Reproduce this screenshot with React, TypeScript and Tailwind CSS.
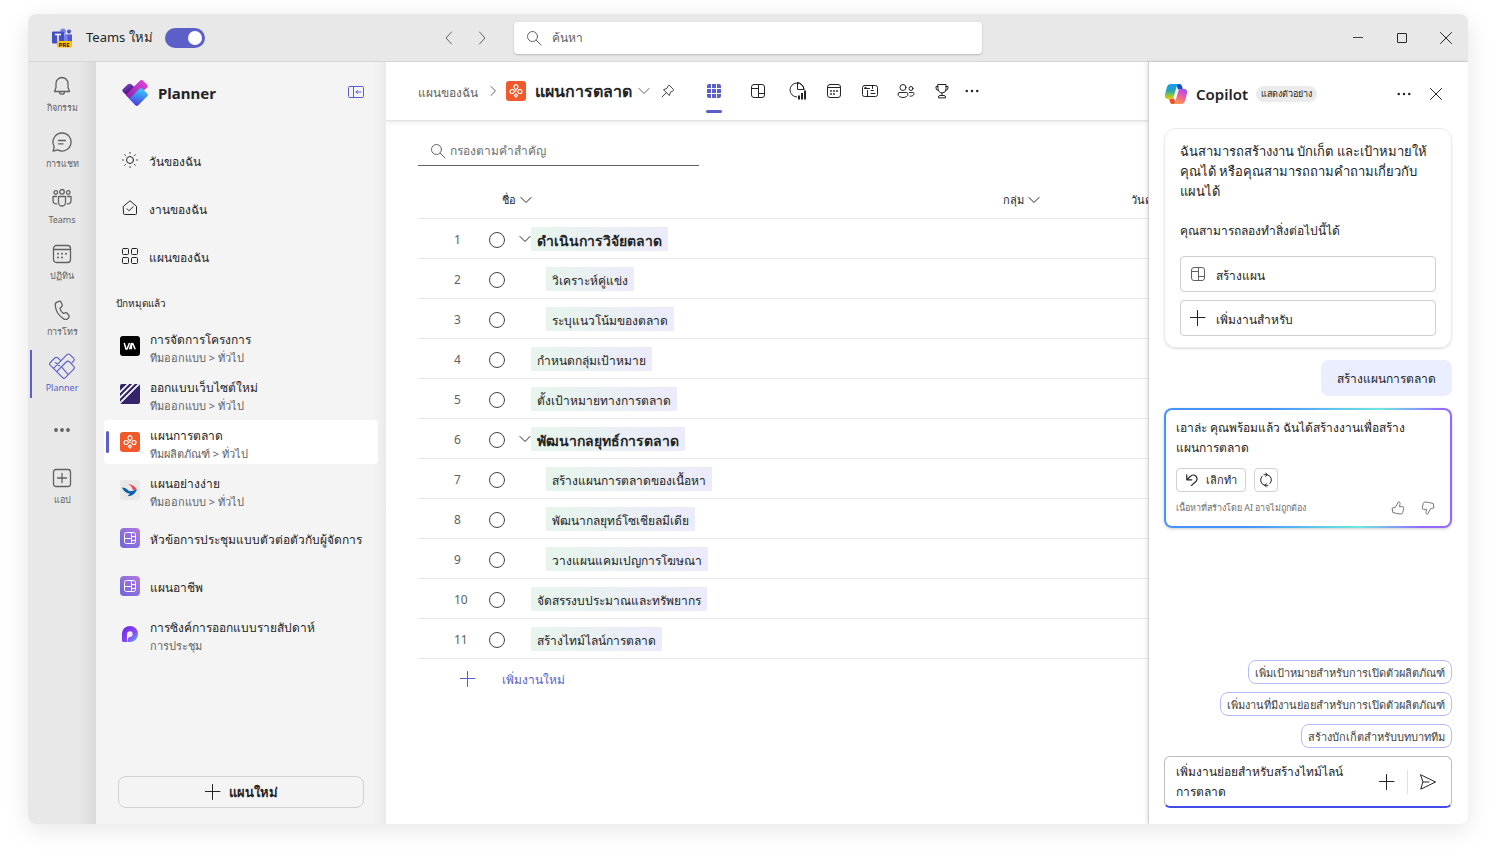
import React, { useState } from "react";

type IconProps = { className?: string; size?: number; children: React.ReactNode; box?: number; stroke?: number };

const Icon: React.FC<IconProps> = ({ className = "", size = 20, box = 20, stroke = 1, children }) => (
  <svg
    width={size}
    height={size}
    viewBox={`0 0 ${box} ${box}`}
    fill="none"
    stroke="currentColor"
    strokeWidth={stroke}
    strokeLinecap="round"
    strokeLinejoin="round"
    className={`shrink-0 ${className}`}
    aria-hidden="true"
  >
    {children}
  </svg>
);

// Small glyphs
const Search = ({ size = 16 }: { size?: number }) => (
  <Icon size={size} box={16}>
    <circle cx="6.5" cy="6.5" r="5" />
    <path d="M10.2 10.2 15 15" />
  </Icon>
);
const ChevronDown = () => (
  <Icon size={12} box={12}>
    <path d="M1 3.5 6 8.5l5-5" />
  </Icon>
);
const Plus = ({ size = 16 }: { size?: number }) => (
  <Icon size={size} box={16}>
    <path d="M7.5 .5v15M0 7.5h15" />
  </Icon>
);
const Close = () => (
  <Icon size={12} box={12}>
    <path d="m.5.5 11 11M11.5.5l-11 11" />
  </Icon>
);
const Dots = ({ size = 16 }: { size?: number }) => (
  <svg width={size} height={size} viewBox="0 0 16 16" fill="currentColor" aria-hidden="true">
    <circle cx="2" cy="8" r="1.4" />
    <circle cx="8" cy="8" r="1.4" />
    <circle cx="14" cy="8" r="1.4" />
  </svg>
);
const BoardIcon = ({ className = "" }: { className?: string }) => (
  <Icon size={16} box={16} className={className}>
    <rect x="1.5" y="1.5" width="13" height="13" rx="2.5" />
    <path d="M8.500 1.5v13M1.500 5.500h7M8.500 10.500h6" />
  </Icon>
);
const CalendarIcon = () => (
  <Icon size={16} box={16}>
    <rect x="1.5" y="1.5" width="13" height="13" rx="2.5" />
    <path d="M1.5 4.5h13" />
    <g fill="currentColor" stroke="none">
      <circle cx="5" cy="8" r=".9" />
      <circle cx="8" cy="8" r=".9" />
      <circle cx="11" cy="8" r=".9" />
      <circle cx="5" cy="11" r=".9" />
      <circle cx="8" cy="11" r=".9" />
    </g>
  </Icon>
);

// Logos
const TeamsLogo = () => (
  <svg width="22" height="20" viewBox="0 0 22 20" aria-hidden="true">
    <circle cx="12" cy="3.4" r="2.8" fill="#7b83eb" />
    <circle cx="18" cy="3.6" r="2.1" fill="#5059c9" />
    <path d="M14 6.5h7v8a3 3 0 0 1-3 3h-4z" fill="#5059c9" />
    <path d="M7 6.5h9.5v8a4 4 0 0 1-4 4H11a4 4 0 0 1-4-4z" fill="#7b83eb" />
    <rect x="1" y="3.5" width="12" height="12" rx="1" fill="#4450c4" />
    <path d="M4 6.5h6M7 6.5v6.5" stroke="#fff" strokeWidth="1.5" fill="none" />
    <rect x="6" y="13" width="15" height="6.5" rx="1" fill="#ffc20e" />
    <text x="7.6" y="18.8" fontSize="6" fontWeight="700" fill="#222" fontFamily="Noto Sans, sans-serif">
      PRE
    </text>
  </svg>
);
const PlannerLogo = () => (
  <svg width="26" height="26" viewBox="0 0 26 26" aria-hidden="true">
    <defs>
      <linearGradient id="plA" x1="0" y1="0" x2=".6" y2="1">
        <stop offset="0" stopColor="#8b52d8" />
        <stop offset=".7" stopColor="#4a1a86" />
      </linearGradient>
      <linearGradient id="plB" x1="1" y1="0" x2="0" y2="1">
        <stop offset="0" stopColor="#e34ae0" />
        <stop offset="1" stopColor="#8a1ba6" />
      </linearGradient>
      <linearGradient id="plC" x1=".6" y1="0" x2=".4" y2="1">
        <stop offset="0" stopColor="#3ecbf7" />
        <stop offset=".5" stopColor="#3f86f2" />
        <stop offset="1" stopColor="#5236d6" />
      </linearGradient>
    </defs>
    <path d="M5.5 4.6 1 9.1a2 2 0 0 0 0 2.8L5.2 16 14 8.5 9.6 4.6a3 3 0 0 0-4.1 0z" fill="url(#plA)" />
    <path d="M17.600 1 3.600 15l4.200 4.200a2 2 0 0 0 2.800 0L24.800 8a2.300 2.300 0 0 0 .3-3.300L21.500 1a2.800 2.800 0 0 0-3.900 0z" fill="url(#plB)" />
    <path d="M17.200 9 7.200 19l6.200 6.200a2 2 0 0 0 2.800 0l9-9a2 2 0 0 0 0-2.800l-4.300-4.300a2.700 2.700 0 0 0-3.700-.1z" fill="url(#plC)" />
  </svg>
);
const CopilotLogo = () => (
  <svg width="24" height="22" viewBox="0 0 24 22" aria-hidden="true">
    <defs>
      <linearGradient id="cpA" x1="0" y1="0" x2="0" y2="1">
        <stop offset="0" stopColor="#1a9bf0" />
        <stop offset=".45" stopColor="#22a5b8" />
        <stop offset=".75" stopColor="#8cc63f" />
        <stop offset="1" stopColor="#f5c400" />
      </linearGradient>
      <linearGradient id="cpB" x1=".7" y1="0" x2=".3" y2="1">
        <stop offset="0" stopColor="#a44cf0" />
        <stop offset=".5" stopColor="#f0609a" />
        <stop offset="1" stopColor="#ff9a4a" />
      </linearGradient>
    </defs>
    <path d="M12 1h3.5c1.6 0 2.2 1.2 2.6 2.6L19 6.5h-5z" fill="#1a4fc9" />
    <path d="M12 21H8.500c-1.600 0-2.200-1.200-2.600-2.600L5 15.500h5z" fill="#e8522c" />
    <path d="M7 1h8c-2 .6-2.500 3-3.200 5.500l-1.600 6c-.6 2-1.500 3.500-3.500 3.500H4c-2.600 0-3.600-2-3-4.500l1.800-7C3.500 2 5 1 7 1z" fill="url(#cpA)" />
    <path d="M17 21H9c2-.6 2.500-3 3.200-5.500l1.600-6c.6-2 1.500-3.500 3.500-3.500H20c2.600 0 3.600 2 3 4.500l-1.800 7C20.500 20 19 21 17 21z" fill="url(#cpB)" />
  </svg>
);
const KnotLogo = () => (
  <svg width="20" height="20" viewBox="0 0 20 20" className="shrink-0" aria-hidden="true">
    <rect width="20" height="20" rx="3" fill="#f1592a" />
    <g fill="none" stroke="#fff" strokeWidth="1.2" strokeLinecap="round">
      <path d="M7.600 9.300A2 2 0 1 0 7.300 12L11.600 7.200A2.100 2.100 0 1 0 8.400 7.200L9.200 8.200M11.200 10.400L12.700 12A2 2 0 1 0 12.400 9.300" />
      <path d="m10 12.800 1.600 1.600L10 16l-1.600-1.600z" strokeLinejoin="round" />
    </g>
  </svg>
);
const ViaLogo = () => (
  <svg width="20" height="20" viewBox="0 0 20 20" className="shrink-0" aria-hidden="true">
    <rect width="20" height="20" rx="3" fill="#000" />
    <path d="M4.200 7l1.800 6h1L9.500 7M9.500 13.300 11.700 7M12.500 7l2.700 6.300M11.400 7v6.300" stroke="#fff" strokeWidth="1.500" fill="none" />
  </svg>
);
const StripeLogo = () => (
  <svg width="20" height="20" viewBox="0 0 20 20" className="shrink-0" aria-hidden="true">
    <defs>
      <clipPath id="stripeBox">
        <rect width="20" height="20" rx="2" />
      </clipPath>
    </defs>
    <g clipPath="url(#stripeBox)">
      <rect width="20" height="20" fill="#35246b" />
      <path d="M-2 10 10-2M-2 15.500 15.500-2M-2 21 21-2" stroke="#fff" strokeWidth="1.700" />
    </g>
  </svg>
);
const BirdLogo = () => (
  <svg width="20" height="20" viewBox="0 0 20 20" className="shrink-0" aria-hidden="true">
    <rect width="20" height="20" rx="3" fill="#e8e8e8" />
    <path d="M8 4c4 .5 7.500 2.500 8.500 5.800L12.800 10C12.500 7.500 11 5.500 8 4z" fill="#ef4056" />
    <path d="M2 7.500c3 .2 5.300 1.400 7 3.600 2.200.2 4.800-.3 8-1.800-1.500 4.200-4.500 6.800-9.500 7l2.300-2.500C6 13.200 3.500 11.200 2 7.500z" fill="#0a5fa8" />
  </svg>
);
const GridLogo = () => (
  <svg width="20" height="20" viewBox="0 0 20 20" className="shrink-0" aria-hidden="true">
    <defs>
      <linearGradient id="gridBg" x1="1" y1="0" x2="0" y2="1">
        <stop offset="0" stopColor="#b478dc" />
        <stop offset="1" stopColor="#6a66dd" />
      </linearGradient>
    </defs>
    <rect width="20" height="20" rx="4" fill="url(#gridBg)" />
    <g fill="none" stroke="#fff">
      <rect x="4.500" y="4.500" width="11" height="11" rx="2" />
      <path d="M11.500 4.500v11M4.500 10.500h7M11.500 8.500h4M11.500 12.500h4" />
    </g>
  </svg>
);
const LoopLogo = () => (
  <svg width="20" height="20" viewBox="0 0 20 20" className="shrink-0" aria-hidden="true">
    <defs>
      <linearGradient id="loopBg" x1="0" y1="0" x2="1" y2="1">
        <stop offset="0" stopColor="#6a1ee0" />
        <stop offset=".6" stopColor="#8a4cf5" />
        <stop offset="1" stopColor="#45c8f5" />
      </linearGradient>
    </defs>
    <path d="M10 2a8 8 0 1 1 0 16H3.500A1.500 1.500 0 0 1 2 16.500V10a8 8 0 0 1 8-8z" fill="url(#loopBg)" />
    <path d="M10 7.300a2.800 2.800 0 1 1-.2 5.600c-1.300 0-2.300 2-2.300 5.100H7V10a3 3 0 0 1 3-2.700z" fill="#f3eefd" />
  </svg>
);

// App rail on the far left
const railItems = [
  {
    label: "กิจกรรม",
    icon: (
      <path d="M10 1.500a6 6 0 0 0-6 6v4L2.500 15.500h15L16 11.500v-4a6 6 0 0 0-6-6zM7.500 15.700a2.500 2.500 0 0 0 5 0" />
    ),
  },
  {
    label: "การแชท",
    icon: <path d="M10 1a9 9 0 1 1-4.300 16.900L1.200 19l1-4.500A9 9 0 0 1 10 1zM6.500 8.500h7M6.500 11.800h4.500" />,
  },
  {
    label: "Teams",
    icon: (
      <>
        <circle cx="10" cy="3.800" r="2.300" />
        <circle cx="3.800" cy="4.500" r="1.800" />
        <circle cx="16.200" cy="4.500" r="1.800" />
        <path d="M6.500 8.500h7v6a3.500 3.500 0 0 1-7 0zM4.500 8.500H1v4.300a3 3 0 0 0 3.700 3M15.500 8.500H19v4.300a3 3 0 0 1-3.700 3" />
      </>
    ),
  },
  {
    label: "ปฏิทิน",
    icon: (
      <>
        <rect x="1.500" y="1.500" width="17" height="17" rx="3" />
        <path d="M1.500 5.500h17" />
        <path d="M6 9.800h.01M10 9.800h.01M14 9.800h.01M6 13.500h.01M10 13.500h.01" strokeWidth="2" />
      </>
    ),
  },
  {
    label: "การโทร",
    icon: (
      <path d="M5.500 1.800 7 1.300c.9-.3 1.800.2 2.200 1l.9 2.200c.3.800.1 1.600-.5 2.200L8 8.200c.3 1.900 1.600 4.100 3.200 5.200l2.100-.6c.8-.2 1.600 0 2.100.7l1.400 1.900c.5.700.4 1.700-.2 2.300l-1 1c-1.100 1-2.700 1-3.900.2C6.500 15.500 3.500 10.300 3.200 5c0-1.500.9-2.800 2.300-3.200z" />
    ),
  },
];

const Rail = () => (
  <nav className="flex w-[68px] shrink-0 flex-col gap-2 bg-gradient-to-r from-[#e8e8e8] from-75% to-[#dadada] pt-2 text-[#616161]">
    {railItems.map((item) => (
      <a key={item.label} href="#" className="flex h-12 flex-col items-center text-[9px] leading-3">
        <span className="flex h-8 items-center">
          <Icon size={20} stroke={1.3}>
            {item.icon}
          </Icon>
        </span>
        {item.label}
      </a>
    ))}
    <a href="#" className="relative flex h-12 flex-col items-center text-[9px] leading-3 text-[#5b5fc7]">
      <span className="absolute top-0 left-[2px] h-12 w-[2px] bg-[#5b5fc7]" />
      <span className="flex h-8 items-center">
        <Icon size={26} box={26} stroke={1.1}>
          <path d="M11.500 7.300 9 5a2.300 2.300 0 0 0-3.200 0L1.300 9.500a2 2 0 0 0 0 2.800l3.200 3.100" />
          <path d="M4.500 15.400 17.700 1.900a2.500 2.500 0 0 1 3.500 0l3.300 3.300a2 2 0 0 1 0 2.800l-1.800 2.100M4.500 15.400l3.200 3.300M6.500 9.500l4.200 3.500" />
          <path d="M17.200 9 7.700 18.700l5.900 6a2 2 0 0 0 2.800 0l8.300-8.500a2 2 0 0 0 0-2.800L20.700 9a2.500 2.500 0 0 0-3.500 0zM12.500 13.900l6.500 7.500" />
        </Icon>
      </span>
      Planner
    </a>
    <button type="button" aria-label="เพิ่มเติม" className="flex h-12 items-center justify-center">
      <svg width="16" height="16" viewBox="0 0 16 16" fill="currentColor" aria-hidden="true">
        <circle cx="2" cy="8" r="1.900" />
        <circle cx="8" cy="8" r="1.900" />
        <circle cx="14" cy="8" r="1.900" />
      </svg>
    </button>
    <a href="#" className="flex h-12 flex-col items-center text-[9px] leading-3">
      <span className="flex h-8 items-center">
        <Icon size={20} stroke={1.3}>
          <rect x="1.500" y="1.500" width="17" height="17" rx="2.500" />
          <path d="M10 5.500v9M5.500 10h9" />
        </Icon>
      </span>
      แอป
    </a>
  </nav>
);

// Planner sidebar
const sideLinks = [
  {
    label: "วันของฉัน",
    icon: (
      <>
        <circle cx="8" cy="8" r="3.500" />
        <path d="M8 .5v.8M8 14.700v.8M.5 8h.8M14.700 8h.8M2.700 2.700l.8.8M12.500 12.500l.8.8M2.700 13.300l.8-.8M12.500 3.500l.8-.8" />
      </>
    ),
  },
  {
    label: "งานของฉัน",
    icon: <path d="M1.500 6.300 8 .8l6.500 5.500v7.200a1 1 0 0 1-1 1h-11a1 1 0 0 1-1-1zM5 8.800l2 2 4-4" />,
  },
  {
    label: "แผนของฉัน",
    icon: (
      <>
        <rect x=".5" y=".5" width="6" height="6" rx="1" />
        <rect x="9.500" y=".5" width="6" height="6" rx="1" />
        <rect x=".5" y="9.500" width="6" height="6" rx="1" />
        <rect x="9.500" y="9.500" width="6" height="6" rx="1" />
      </>
    ),
  },
];

const pinned = [
  { title: "การจัดการโครงการ", sub: "ทีมออกแบบ > ทั่วไป", logo: <ViaLogo /> },
  { title: "ออกแบบเว็บไซต์ใหม่", sub: "ทีมออกแบบ > ทั่วไป", logo: <StripeLogo /> },
  { title: "แผนการตลาด", sub: "ทีมผลิตภัณฑ์ > ทั่วไป", logo: <KnotLogo />, active: true },
  { title: "แผนอย่างง่าย", sub: "ทีมออกแบบ > ทั่วไป", logo: <BirdLogo /> },
  { title: "หัวข้อการประชุมแบบตัวต่อตัวกับผู้จัดการ", logo: <GridLogo /> },
  { title: "แผนอาชีพ", logo: <GridLogo /> },
  { title: "การซิงค์การออกแบบรายสัปดาห์", sub: "การประชุม", logo: <LoopLogo /> },
];

const Sidebar = () => (
  <aside className="flex w-[290px] shrink-0 flex-col bg-gradient-to-r from-[#f4f4f4] from-95% to-[#ebebeb] px-2 pb-4">
    <div className="flex h-[62px] items-center pr-[14px] pl-[18px]">
      <PlannerLogo />
      <h1 className="ml-[10px] flex-1 text-[15px] font-bold text-[#242424]">Planner</h1>
      <button type="button" aria-label="ยุบ" className="text-[#5b5fc7]">
        <Icon size={16} box={16}>
          <rect x=".5" y="1.500" width="15" height="11" rx="1" />
          <path d="M5.500 1.500v11M13 7H8M9.500 5.500 8 7l1.500 1.500" />
        </Icon>
      </button>
    </div>
    <nav className="mt-[14px] flex flex-col gap-1">
      {sideLinks.map((l) => (
        <a key={l.label} href="#" className="flex h-11 items-center gap-[11px] pl-[18px] text-[12px] text-[#242424]">
          <Icon size={16} box={16}>
            {l.icon}
          </Icon>
          <span className="pt-[3px]">{l.label}</span>
        </a>
      ))}
    </nav>
    <h2 className="mt-[17px] mb-[13px] pl-3 text-[10px] leading-4 text-[#242424]">ปักหมุดแล้ว</h2>
    <nav className="flex flex-col gap-1">
      {pinned.map((p) => (
        <a
          key={p.title}
          href="#"
          className={`relative flex h-11 items-center gap-[10px] rounded pl-4 text-[12px] text-[#242424] ${
            p.active ? "bg-white" : ""
          }`}
        >
          {p.active && <span className="absolute top-[11px] left-[2px] h-[22px] w-[3px] rounded bg-[#5b5fc7]" />}
          {p.logo}
          <span className="flex flex-col pt-[3px] whitespace-nowrap">
            <span className="leading-5">{p.title}</span>
            {p.sub && <span className="text-[11px] leading-4 text-[#616161]">{p.sub}</span>}
          </span>
        </a>
      ))}
    </nav>
    <button
      type="button"
      className="mx-[14px] mt-auto flex h-8 items-center justify-center gap-2 rounded-lg border border-[#d1d1d1] text-[13px] font-bold text-[#242424]"
    >
      <Plus />
      <span className="pt-[2px]">แผนใหม่</span>
    </button>
  </aside>
);

// Main grid
const tasks = [
  { name: "ดำเนินการวิจัยตลาด", group: true },
  { name: "วิเคราะห์คู่แข่ง", child: true },
  { name: "ระบุแนวโน้มของตลาด", child: true },
  { name: "กำหนดกลุ่มเป้าหมาย" },
  { name: "ตั้งเป้าหมายทางการตลาด" },
  { name: "พัฒนากลยุทธ์การตลาด", group: true },
  { name: "สร้างแผนการตลาดของเนื้อหา", child: true },
  { name: "พัฒนากลยุทธ์โซเชียลมีเดีย", child: true },
  { name: "วางแผนแคมเปญการโฆษณา", child: true },
  { name: "จัดสรรงบประมาณและทรัพยากร" },
  { name: "สร้างไทม์ไลน์การตลาด" },
];

const views = [
  {
    name: "แผนภูมิ",
    icon: (
      <Icon size={18} box={18}>
        <path d="M7.500 15A7 7 0 1 1 15 7.500H8.500v-7M15 7.500a7 7 0 0 0-6.500-7" />
        <path d="M10 13.500v4M13 11v6.500M16 8.500v9" strokeWidth="2" strokeLinecap="butt" />
      </Icon>
    ),
  },
  { name: "กำหนดการ", icon: <CalendarIcon /> },
  {
    name: "ไทม์ไลน์",
    icon: (
      <Icon size={18} box={18}>
        <rect x="1.500" y="3.500" width="15" height="11" rx="2" />
        <path d="M6.500 8.500v6M11.500 3.500v3M3.500 6.500h5M10 8.500h2.500M10 11.500h4M4 5.500h1" />
      </Icon>
    ),
  },
  {
    name: "บุคคล",
    icon: (
      <Icon size={18} box={18}>
        <circle cx="6" cy="5.500" r="3" />
        <circle cx="14" cy="6.500" r="2" />
        <path d="M2.500 10.500h7a1.500 1.500 0 0 1 1.500 1.500c0 2-2 3.500-5 3.500S1 14 1 12a1.500 1.500 0 0 1 1.500-1.500zM12.500 10.500h3.300A1.200 1.200 0 0 1 17 11.700c0 1.700-1.600 2.600-4 2.500" />
      </Icon>
    ),
  },
  {
    name: "เป้าหมาย",
    icon: (
      <Icon size={16} box={16}>
        <path d="M4 1.500h8V6a4 4 0 0 1-8 0zM4 3.500H2V5a2.500 2.500 0 0 0 2.300 2.500M12 3.500h2V5a2.500 2.500 0 0 1-2.300 2.500M8 10v2.500M4.500 14.500v-.5a1.500 1.500 0 0 1 1.500-1.500h4a1.500 1.500 0 0 1 1.500 1.500v.5z" />
      </Icon>
    ),
  },
];

const TaskGrid = () => {
  const [done, setDone] = useState<number[]>([]);
  const toggle = (i: number) => setDone(done.includes(i) ? done.filter((d) => d !== i) : [...done, i]);

  return (
    <main className="min-w-0 flex-1 overflow-hidden bg-white">
      <header className="flex h-[59px] items-center border-b border-[#e3e3e3] pl-8 shadow-[0_1px_4px_rgba(0,0,0,0.1)]">
        <a href="#" className="pt-[3px] text-[12px] whitespace-nowrap text-[#616161]">
          แผนของฉัน
        </a>
        <span className="mr-2 ml-[10px] text-[#616161]">
          <Icon size={10} box={10}>
            <path d="M3 .5 7.500 5 3 9.500" />
          </Icon>
        </span>
        <KnotLogo />
        <h2 className="ml-[9px] text-[16px] font-bold whitespace-nowrap text-[#242424]">แผนการตลาด</h2>
        <button type="button" aria-label="เลือกแผน" className="ml-[6px] text-[#616161]">
          <ChevronDown />
        </button>
        <button type="button" aria-label="ปักหมุด" className="ml-[10px] text-[#424242]">
          <Icon size={16} box={16}>
            <path d="m9.500 2.500 4 4c.4.400.3 1-.2 1.200L10.500 9.200 9.300 12.500 3.500 6.700l3.300-1.200L8.300 2.700c.2-.5.800-.6 1.200-.2zM6.400 9.600 2 14" />
          </Icon>
        </button>
        <div className="ml-[22px] flex h-full items-center gap-1 text-[#242424]">
          <button
            type="button"
            aria-label="ตาราง"
            className="relative mr-2 flex h-10 w-8 items-center justify-center text-[#5b5fc7]"
          >
            <svg width="14" height="14" viewBox="0 0 14 14" fill="currentColor" aria-hidden="true">
              <path d="M2 0h2v4H0V2a2 2 0 0 1 2-2zM5 0h4v4H5zM10 0h2a2 2 0 0 1 2 2v2h-4zM0 5h4v4H0zM5 5h4v4H5zM10 5h4v4h-4zM0 10h4v4H2a2 2 0 0 1-2-2zM5 10h4v4H5zM10 10h4v2a2 2 0 0 1-2 2h-2z" />
            </svg>
            <span className="absolute -bottom-[2px] left-2 h-[3px] w-4 rounded bg-[#5b5fc7]" />
          </button>
          <button type="button" aria-label="บอร์ด" className="mr-1 flex size-8 items-center justify-center">
            <BoardIcon />
          </button>
          {views.map((v) => (
            <button key={v.name} type="button" aria-label={v.name} className="flex size-8 items-center justify-center">
              {v.icon}
            </button>
          ))}
          <button type="button" aria-label="ตัวเลือกเพิ่มเติม" className="flex h-8 w-5 items-center justify-center">
            <Dots size={14} />
          </button>
        </div>
      </header>

      <div className="pt-4 pl-8">
        <label className="flex h-[29px] w-[281px] items-center gap-1 border-b border-[#616161] pl-3 text-[#616161]">
          <Search />
          <input
            type="text"
            aria-label="กรองตามคำสำคัญ"
            placeholder="กรองตามคำสำคัญ"
            className="w-full bg-transparent text-[12px] outline-none placeholder:text-[#707070]"
          />
        </label>

        <table className="mt-4 w-full table-fixed border-collapse text-[12px] text-[#242424]">
          <colgroup>
            <col className="w-[71px]" />
            <col className="w-[30px]" />
            <col />
            <col className="w-32" />
            <col className="w-[17px]" />
          </colgroup>
          <thead>
            <tr className="h-9 border-b border-[#e8e8e8] text-left text-[11px] whitespace-nowrap">
              <th />
              <th colSpan={2} className="pl-[13px] font-normal">
                <button type="button" className="flex items-center gap-1">
                  ชื่อ <ChevronDown />
                </button>
              </th>
              <th className="font-normal">
                <button type="button" className="flex items-center gap-1">
                  กลุ่ม <ChevronDown />
                </button>
              </th>
              <th className="overflow-hidden font-normal">วันค</th>
            </tr>
          </thead>
          <tbody>
            {tasks.map((t, i) => (
              <tr key={t.name} className="h-10 border-b border-[#e8e8e8]">
                <td className="pt-1 pl-9 text-[#616161]">{i + 1}</td>
                <td className="pt-1">
                  <input
                    type="checkbox"
                    aria-label={t.name}
                    checked={done.includes(i)}
                    onChange={() => toggle(i)}
                    className="block size-4 appearance-none rounded-full border border-[#424242] checked:bg-[#5b5fc7]"
                  />
                </td>
                <td colSpan={3} className="pt-[2px]">
                  <div className={`flex items-center ${t.child ? "pl-[27px]" : t.group ? "" : "pl-3"}`}>
                    {t.group && (
                      <button type="button" aria-label="ยุบกลุ่ม" className="w-3">
                        <ChevronDown />
                      </button>
                    )}
                    <span
                      className={`h-6 bg-gradient-to-r from-[#e7f5ec] to-[#ecebfb] px-[6px] pt-1 leading-5 ${
                        t.group ? "text-[14px] font-bold" : ""
                      }`}
                    >
                      {t.name}
                    </span>
                  </div>
                </td>
              </tr>
            ))}
          </tbody>
        </table>
        <button type="button" className="flex h-10 items-center gap-[26px] pl-[42px] text-[12px] text-[#5b5fc7]">
          <Plus />
          <span className="pt-[3px]">เพิ่มงานใหม่</span>
        </button>
      </div>
    </main>
  );
};

// Copilot pane
const suggestions = [
  "เพิ่มเป้าหมายสำหรับการเปิดตัวผลิตภัณฑ์",
  "เพิ่มงานที่มีงานย่อยสำหรับการเปิดตัวผลิตภัณฑ์",
  "สร้างบักเก็ตสำหรับบทบาททีม",
];

const thumb = "M5.500 14 2 13 1.300 8.200 5.200 7 8.500 1c1.700 0 2.300 1.300 1.800 2.800L9.500 6.500h3.700a1.400 1.400 0 0 1 1.300 1.700l-1.100 5a2.200 2.200 0 0 1-2.600 1.700z";

const Copilot = () => {
  const [draft, setDraft] = useState("เพิ่มงานย่อยสำหรับสร้างไทม์ไลน์การตลาด");

  return (
    <aside className="z-10 flex w-80 shrink-0 flex-col border-l border-[#d1d1d1] bg-white pr-4 pb-4 pl-[15px] text-[12px] leading-5 text-[#242424] shadow-[-1px_0_4px_rgba(0,0,0,0.12)]">
      <div className="mb-[2px] flex h-16 items-center">
        <CopilotLogo />
        <h2 className="ml-2 text-[15px] font-semibold">Copilot</h2>
        <span className="ml-2 rounded-full bg-[#ebebeb] px-[5px] text-[9px] leading-4">แสดงตัวอย่าง</span>
        <button type="button" aria-label="เพิ่มเติม" className="ml-auto flex size-8 items-center justify-center">
          <Dots size={14} />
        </button>
        <button type="button" aria-label="ปิด" className="flex size-8 items-center justify-center">
          <Close />
        </button>
      </div>

      <section className="rounded-xl border border-[#ececec] px-[15px] pt-3 pb-[11px] shadow-[0_1px_2px_rgba(0,0,0,0.14)]">
        <p className="text-[13px]">
          ฉันสามารถสร้างงาน บักเก็ต และเป้าหมายให้คุณได้ หรือคุณสามารถถามคำถามเกี่ยวกับแผนได้
        </p>
        <p className="mt-5">คุณสามารถลองทำสิ่งต่อไปนี้ได้</p>
        <div className="mt-[15px] flex flex-col gap-2">
          <button type="button" className="flex h-9 items-center gap-[10px] rounded border border-[#d1d1d1] px-[9px]">
            <BoardIcon className="text-[#616161]" />
            <span className="pt-[3px]">สร้างแผน</span>
          </button>
          <button type="button" className="flex h-9 items-center gap-[10px] rounded border border-[#d1d1d1] px-[9px]">
            <Plus />
            <span className="pt-[3px]">เพิ่มงานสำหรับ</span>
          </button>
        </div>
      </section>

      <p className="mt-3 self-end rounded-lg bg-[#ebeefe] px-4 pt-[9px] pb-[7px]">สร้างแผนการตลาด</p>

      <section className="mt-3 rounded-lg bg-[linear-gradient(100deg,#4894fe_35%,#6de8e0_70%,#946afd_90%)] p-[2px] shadow-[0_1px_3px_rgba(0,0,0,0.2)]">
        <div className="rounded-md bg-white px-[10px] pt-2 pb-[10px]">
          <p>เอาล่ะ คุณพร้อมแล้ว ฉันได้สร้างงานเพื่อสร้างแผนการตลาด</p>
          <div className="mt-[10px] flex gap-2">
            <button
              type="button"
              className="flex h-6 w-[70px] items-center justify-center gap-2 rounded border border-[#d1d1d1] text-[11px]"
            >
              <Icon size={12} box={12} stroke={1.2}>
                <path d="M.8.800v5h5M1 5.600l3.500-3.300a3.700 3.700 0 0 1 5.600 4.900L5.300 11.600" />
              </Icon>
              เลิกทำ
            </button>
            <button
              type="button"
              aria-label="ลองอีกครั้ง"
              className="flex size-6 items-center justify-center rounded border border-[#d1d1d1]"
            >
              <Icon size={16} box={16}>
                <path d="M6 2.700h3a5.300 5.300 0 0 1 3 8.800M10 13.300H7a5.300 5.300 0 0 1-3-8.800M7.700 1 9.300 2.700 7.700 4.400M8.300 11.600 6.700 13.300 8.300 15" />
              </Icon>
            </button>
          </div>
          <div className="mt-2 flex items-center text-[9px] leading-4 text-[#707070]">
            <span className="flex-1">เนื้อหาที่สร้างโดย AI อาจไม่ถูกต้อง</span>
            <button type="button" aria-label="ถูกใจ" className="mr-4">
              <Icon size={14} box={16} stroke={1.1}>
                <path d={thumb} />
              </Icon>
            </button>
            <button type="button" aria-label="ไม่ถูกใจ" className="mr-[5px]">
              <Icon size={14} box={16} stroke={1.1} className="rotate-180">
                <path d={thumb} />
              </Icon>
            </button>
          </div>
        </div>
      </section>

      <div className="mt-auto flex flex-col items-end gap-2">
        {suggestions.map((s) => (
          <button
            key={s}
            type="button"
            className="h-6 rounded-lg border border-[#b4bdfb] px-[6px] pt-[2px] text-[11px] leading-5 whitespace-nowrap text-[#424242]"
          >
            {s}
          </button>
        ))}
      </div>

      <div className="mt-2 flex h-[52px] items-center rounded-md border border-b-2 border-[#bdbdbd] border-b-[#444ce7] pr-[15px] pl-[11px]">
        <textarea
          aria-label="ข้อความ"
          value={draft}
          onChange={(e) => setDraft(e.target.value)}
          rows={2}
          className="h-10 min-w-0 flex-1 resize-none overflow-hidden outline-none"
        />
        <button type="button" aria-label="แนบ" className="ml-6">
          <Plus />
        </button>
        <span className="mx-3 h-6 w-px bg-[#e0e0e0]" />
        <button type="button" aria-label="ส่ง">
          <Icon size={16} box={16}>
            <path d="M.8.800 15.500 8 .8 15.200 2.800 8zM2.800 8H9" />
          </Icon>
        </button>
      </div>
    </aside>
  );
};

const App: React.FC = () => (
  <div className="flex min-h-screen flex-col bg-white px-7 pt-[14px] pb-[42px] font-['Noto_Sans',sans-serif]">
    <div className="flex flex-1 flex-col overflow-hidden rounded-lg shadow-[0_6px_24px_rgba(0,0,0,0.1)]">
      {/* Title bar */}
      <header className="grid h-12 grid-cols-[1fr_468px_1fr] items-center border-b border-[#d6d6d6] bg-[#e8e8e8] text-[#242424]">
        <div className="flex items-center pl-[23px]">
          <TeamsLogo />
          <label className="ml-[13px] flex items-center gap-3 text-[13px]">
            Teams ใหม่
            <input
              type="checkbox"
              role="switch"
              defaultChecked
              className="flex h-5 w-10 appearance-none items-center rounded-full bg-[#8a8a8a] px-[3px] before:size-[14px] before:rounded-full before:bg-white checked:justify-end checked:bg-[#5b5fc7]"
            />
          </label>
          <div className="mr-[25px] ml-auto flex gap-[19px] text-[#616161]">
            <button type="button" aria-label="ย้อนกลับ">
              <Icon size={14} box={14}>
                <path d="M9.500 1 4 7l5.500 6" />
              </Icon>
            </button>
            <button type="button" aria-label="ไปข้างหน้า">
              <Icon size={14} box={14}>
                <path d="M4.500 1 10 7l-5.500 6" />
              </Icon>
            </button>
          </div>
        </div>
        <label className="flex h-8 items-center gap-[10px] rounded bg-white px-3 text-[#616161] shadow-[0_1px_2px_rgba(0,0,0,0.2)]">
          <Search />
          <input
            type="text"
            aria-label="ค้นหา"
            placeholder="ค้นหา"
            className="w-full bg-transparent text-[12px] outline-none placeholder:text-[#616161]"
          />
        </label>
        <div className="flex justify-end">
          <button type="button" aria-label="ย่อเล็กสุด" className="flex h-8 w-11 items-center justify-center">
            <span className="h-px w-[10px] bg-[#424242]" />
          </button>
          <button type="button" aria-label="ขยาย" className="flex h-8 w-11 items-center justify-center">
            <span className="size-[10px] rounded-[1px] border border-[#242424]" />
          </button>
          <button type="button" aria-label="ปิดหน้าต่าง" className="flex h-8 w-11 items-center justify-center">
            <Close />
          </button>
        </div>
      </header>

      <div className="flex flex-1">
        <Rail />
        <Sidebar />
        <TaskGrid />
        <Copilot />
      </div>
    </div>
  </div>
);

export default App;
